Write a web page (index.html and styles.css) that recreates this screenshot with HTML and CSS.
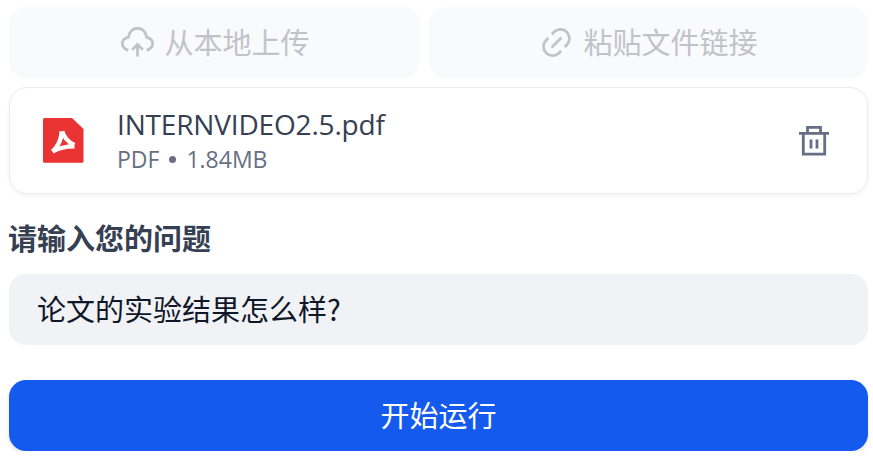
FILE: index.html
```html
<!DOCTYPE html>
<html lang="zh-CN">
<head>
<meta charset="utf-8">
<title>文件问答</title>
<link rel="stylesheet" href="styles.css">
</head>
<body>
<main class="form">
  <div class="sources">
    <button class="source source-local" type="button" disabled>
      <svg class="icon-cloud" width="33" height="30" viewBox="0 0 33 30" fill="none" stroke="currentColor" stroke-width="2.8">
        <path d="M7.3 23.4C-.7 20.6-.7 12 7.3 10.4C9.3-1.8 23.7-1.8 25.7 10.4C33.7 12 33.7 20.6 25.7 23.4"/>
        <path d="M16.5 29.5V18M11.2 22.7L16.5 17.4L21.8 22.7"/>
      </svg>
      <span>从本地上传</span>
    </button>
    <button class="source source-link" type="button" disabled>
      <svg class="icon-link" width="29" height="29" viewBox="0 0 29 29" fill="none" stroke="currentColor" stroke-width="2.8">
        <path d="M9.8 6.3L12 4.1A8.9 8.9 0 0 1 24.9 16.7L22.7 18.9"/>
        <path d="M19.2 22.7L17 24.9A8.9 8.9 0 0 1 4.1 12.3L6.3 10.1"/>
        <path d="M9.6 19.4L19.5 9.5"/>
      </svg>
      <span>粘贴文件链接</span>
    </button>
  </div>
  <section class="file">
    <svg class="icon-pdf" width="41" height="45" viewBox="0 0 41 45">
      <path d="M1.5 0H29L40.5 11V43.3Q40.5 44.8 39 44.8H1.5Q0 44.8 0 43.3V1.5Q0 0 1.5 0Z" fill="#ea3434"/>
      <path d="M18.6 13.2C19 20 15 28.5 9.6 33.7M19.2 13.2Q21.5 22 31.3 27M9.5 33.6Q18 28.4 31.5 28.4" fill="none" stroke="#fff" stroke-width="4.4"/>
    </svg>
    <div class="file-info">
      <div class="file-name">INTERNVIDEO2.5.pdf</div>
      <div class="file-meta"><span>PDF</span><span class="dot"></span><span>1.84MB</span></div>
    </div>
    <svg class="icon-trash" width="30" height="30" viewBox="0 0 30 30" fill="none" stroke="currentColor" stroke-width="2.8">
      <path d="M0 7.4H30M8.5 7.4V1.4H21.5V7.4M4.3 7.4V28.2H25.7V7.4M12 13.5V22.5M18 13.5V22.5"/>
    </svg>
  </section>
  <label class="label" for="question">请输入您的问题</label>
  <input class="question" id="question" type="text" value="论文的实验结果怎么样?">
  <button class="run" type="button">开始运行</button>
</main>
</body>
</html>
```
FILE: styles.css
```css
* { box-sizing: border-box; }
body {
  margin: 0;
  background: #fff;
  font-family: "Noto Sans CJK SC", sans-serif;
  font-size: 29px;
  overflow: hidden;
}
.form {
  display: flex;
  flex-direction: column;
  padding: 7px 5px 0 9px;
}
.sources {
  display: grid;
  grid-template-columns: 411px 1fr;
  gap: 9px;
  height: 71px;
}
.source {
  display: flex;
  align-items: center;
  justify-content: center;
  padding: 0 0 1px 2px;
  border: 0;
  border-radius: 17px;
  background: #f9fafc;
  color: #c1c3ca;
  font: 400 29px/42px "Noto Sans CJK SC", sans-serif;
}
.source span {
  margin-top: -2px;
}
.source-local { gap: 10px; }
.source-link {
  gap: 12px;
  padding-left: 3px;
}
.source svg { flex: none; }
.file {
  display: flex;
  align-items: center;
  height: 107px;
  margin-top: 9px;
  padding: 0 38px 0 33px;
  border: 1px solid #ececef;
  border-radius: 18px;
  box-shadow: 0 2px 4px rgba(16, 24, 40, .05);
  font-family: "Open Sans", sans-serif;
}
.file-info {
  flex: 1;
  margin-left: 33px;
}
.file-name {
  color: #354052;
  font-size: 28px;
  letter-spacing: -.17px;
  line-height: 36px;
}
.file-meta {
  display: flex;
  align-items: center;
  gap: 10px;
  color: #676f83;
  font-size: 23px;
  line-height: 34px;
}
.dot {
  width: 7px;
  height: 7px;
  margin-top: 2px;
  border-radius: 50%;
  background: currentColor;
}
.icon-trash { color: #676f83; }
.label {
  margin-top: 22px;
  margin-left: -1px;
  color: #354052;
  font-weight: 700;
  line-height: 42px;
}
.question {
  width: 100%;
  height: 71px;
  margin-top: 16px;
  padding: 0 28px 4px;
  border: 0;
  border-radius: 17px;
  outline: 0;
  background: #f1f2f6;
  color: #101828;
  font: 400 29px/42px "Noto Sans CJK SC", sans-serif;
}
.run {
  height: 71px;
  margin-top: 35px;
  padding: 0 0 3px;
  border: 0;
  border-radius: 17px;
  background: #155aef;
  box-shadow: 0 2px 4px rgba(16, 24, 40, .12);
  color: #fff;
  font: 400 29px/42px "Noto Sans CJK SC", sans-serif;
}
```
